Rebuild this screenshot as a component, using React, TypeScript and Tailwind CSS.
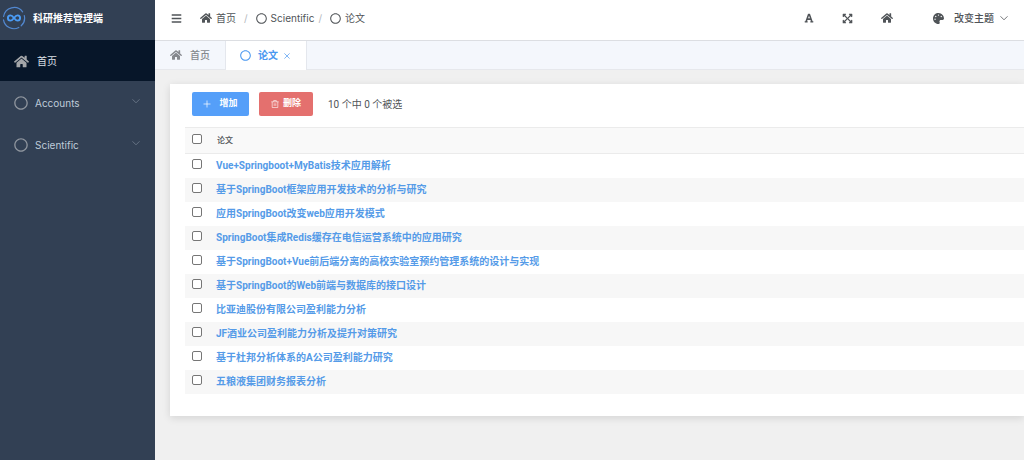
import { useState } from 'react';
import type { ReactNode } from 'react';
import {
  FaBars,
  FaExpandArrowsAlt,
  FaFont,
  FaHome,
  FaPalette,
  FaRegCircle,
} from 'react-icons/fa';

const papers = [
  'Vue+Springboot+MyBatis技术应用解析',
  '基于SpringBoot框架应用开发技术的分析与研究',
  '应用SpringBoot改变web应用开发模式',
  'SpringBoot集成Redis缓存在电信运营系统中的应用研究',
  '基于SpringBoot+Vue前后端分离的高校实验室预约管理系统的设计与实现',
  '基于SpringBoot的Web前端与数据库的接口设计',
  '比亚迪股份有限公司盈利能力分析',
  'JF酒业公司盈利能力分析及提升对策研究',
  '基于杜邦分析体系的A公司盈利能力研究',
  '五粮液集团财务报表分析',
];

const checkboxClass =
  'block size-[10px] appearance-none rounded-[2px] border border-[#767676] bg-white checked:bg-[#409eff]';

function Logo() {
  return (
    <svg viewBox="0 0 24 24" className="size-6" fill="none" aria-hidden="true">
      <g stroke="#5288d0" strokeWidth="1.2" strokeLinecap="round">
        <path d="M1.6 10.5A10.6 10.6 0 0 1 20.6 5.8" />
        <path d="M22.3 9.6A10.6 10.6 0 0 1 19.2 19.8" />
        <path d="M16.8 21.5A10.6 10.6 0 0 1 1.5 13.8" />
      </g>
      <path
        d="M12 12C10.8 10.4 9.7 9.4 8.5 9.4a2.6 2.6 0 0 0 0 5.2c1.2 0 2.3-1 3.5-2.6s2.3-2.6 3.5-2.6a2.6 2.6 0 0 1 0 5.2c-1.2 0-2.3-1-3.5-2.6Z"
        stroke="#4b9cf5"
        strokeWidth="1.9"
      />
    </svg>
  );
}

function Chevron({ className }: { className: string }) {
  return (
    <svg viewBox="0 0 8 8" className={className} fill="none" stroke="currentColor" aria-hidden="true">
      <path d="M.5 2.3 4 5.8l3.5-3.5" strokeWidth=".8" />
    </svg>
  );
}

function MenuGroup({ label }: { label: string }) {
  return (
    <button type="button" className="flex h-[42px] w-full items-center px-[14px] text-[#bfcbd9]">
      <FaRegCircle className="size-[14px] text-[#8f959e]" />
      <span className="ml-[7px]">{label}</span>
      <Chevron className="mr-px mb-1 ml-auto size-2 text-[#748091]" />
    </button>
  );
}

function Crumb({ icon, label }: { icon: ReactNode; label: string }) {
  return (
    <a href="#" className="flex items-center gap-1">
      {icon}
      <span>{label}</span>
    </a>
  );
}

export default function App() {
  const [selected, setSelected] = useState<string[]>([]);

  const toggle = (title: string) =>
    setSelected((prev) => (prev.includes(title) ? prev.filter((t) => t !== title) : [...prev, title]));

  return (
    <div className="flex min-h-screen bg-[#f0f0f0] font-['Roboto','Noto_Sans_CJK_SC',sans-serif] text-[10px] text-[#505458]">
      {/* Sidebar */}
      <aside className="w-[155px] shrink-0 bg-[#324054] font-['Inter','Noto_Sans_CJK_SC',sans-serif]">
        <div className="flex h-10 items-center gap-[7px] px-[2px] pb-1">
          <Logo />
          <h1 className="font-bold text-white">科研推荐管理端</h1>
        </div>
        <nav>
          <a href="#" className="flex h-[41px] items-center gap-2 bg-[#071629] px-[14px] pt-[2px] text-[#dce1e8]">
            <FaHome className="size-[15px] text-[#a3a5a8]" />
            <span>首页</span>
          </a>
          <div className="pt-px">
            <MenuGroup label="Accounts" />
            <MenuGroup label="Scientific" />
          </div>
        </nav>
      </aside>

      <div className="flex min-w-0 flex-1 flex-col">
        {/* Top bar */}
        <header className="flex h-[41px] items-center border-b border-[#dcdee2] bg-white pb-1 font-['Inter','Noto_Sans_CJK_SC',sans-serif]">
          <button type="button" aria-label="折叠菜单" className="ml-4">
            <FaBars className="size-[11px]" />
          </button>
          <nav className="ml-[18px] flex items-center gap-2">
            <Crumb icon={<FaHome className="size-3" />} label="首页" />
            <span className="text-[#b4b8be]">/</span>
            <Crumb icon={<FaRegCircle className="size-[11px]" />} label="Scientific" />
            <span className="-ml-1 text-[#b4b8be]">/</span>
            <Crumb icon={<FaRegCircle className="size-[11px]" />} label="论文" />
          </nav>
          <div className="mr-4 ml-auto flex items-center">
            <button type="button" aria-label="字体大小">
              <FaFont className="size-[10px]" />
            </button>
            <button type="button" aria-label="全屏" className="ml-7">
              <FaExpandArrowsAlt className="size-[11px]" />
            </button>
            <a href="#" aria-label="首页" className="ml-7">
              <FaHome className="size-3" />
            </a>
            <button type="button" className="ml-10 flex items-center">
              <FaPalette className="size-[11px]" />
              <span className="ml-[10px] font-medium">改变主题</span>
              <Chevron className="ml-[6px] size-2" />
            </button>
          </div>
        </header>

        {/* Open tabs */}
        <div className="flex h-[29px] border-b border-[#e6e8ec] bg-[#f4f7fc] font-['Inter','Noto_Sans_CJK_SC',sans-serif] font-medium">
          <button type="button" className="flex items-center gap-2 border-r border-[#e4e7ed] px-[15px] text-[#85888d]">
            <FaHome className="size-3" />
            <span>首页</span>
          </button>
          <div className="-mb-px flex items-center border-r border-[#e4e7ed] bg-white pr-4 pl-[14px] text-[#4a98f0]">
            <button type="button" className="flex items-center gap-[7px] font-bold">
              <FaRegCircle className="size-[11px]" />
              <span>论文</span>
            </button>
            <button type="button" aria-label="关闭" className="ml-[6px]">
              <svg viewBox="0 0 6 6" className="size-[6px]" stroke="currentColor" strokeWidth=".7" aria-hidden="true">
                <path d="m.4.4 5.2 5.2M5.6.4.4 5.6" />
              </svg>
            </button>
          </div>
        </div>

        {/* Paper list */}
        <main className="flex-1 pt-[14px] pl-[15px]">
          <section className="bg-white pt-2 pb-[22px] pl-[15px] shadow-[0_2px_8px_rgba(0,0,0,0.12)]">
            <div className="flex items-center gap-[10px] pl-[7px]">
              <button type="button" className="flex h-6 w-[57px] items-center justify-center gap-2 rounded-[2px] bg-[#559ff9] text-[9px] font-bold text-white">
                <svg viewBox="0 0 8 8" className="size-2" stroke="currentColor" strokeWidth=".7" aria-hidden="true">
                  <path d="M4 .5v7M.5 4h7" />
                </svg>
                增加
              </button>
              <button type="button" className="flex h-6 w-[54px] items-center justify-center gap-1 rounded-[2px] bg-[#e4706e] text-[9px] font-bold text-white">
                <svg viewBox="0 0 8 8" className="size-2" fill="none" stroke="currentColor" strokeWidth=".6" aria-hidden="true">
                  <path d="M.3 1.8h7.4M2.7 1.8V.5h2.6v1.3M1.2 1.8v5.7h5.6V1.8M3.2 3.3v2.6M4.8 3.3v2.6" />
                </svg>
                删除
              </button>
              <span className="ml-[5px]">10 个中 {selected.length} 个被选</span>
            </div>
            <table className="mt-[11px] w-full border-collapse text-left">
              <thead>
                <tr className="h-[26px] border-y border-[#ebebeb] bg-[#f9f9f9]">
                  <th className="w-[31px] pb-[3px] pl-[7px]">
                    <input
                      type="checkbox"
                      aria-label="全选"
                      className={checkboxClass}
                      checked={selected.length === papers.length}
                      onChange={(e) => setSelected(e.target.checked ? papers : [])}
                    />
                  </th>
                  <th className="pl-[1px] text-[8px] font-medium">论文</th>
                </tr>
              </thead>
              <tbody>
                {papers.map((title) => (
                  <tr key={title} className="h-6 even:bg-[#f7f7f7]">
                    <td className="pb-[3px] pl-[7px]">
                      <input
                        type="checkbox"
                        aria-label={title}
                        className={checkboxClass}
                        checked={selected.includes(title)}
                        onChange={() => toggle(title)}
                      />
                    </td>
                    <td className="font-bold text-[#559be8]">
                      <a href="#">{title}</a>
                    </td>
                  </tr>
                ))}
              </tbody>
            </table>
          </section>
        </main>
      </div>
    </div>
  );
}
